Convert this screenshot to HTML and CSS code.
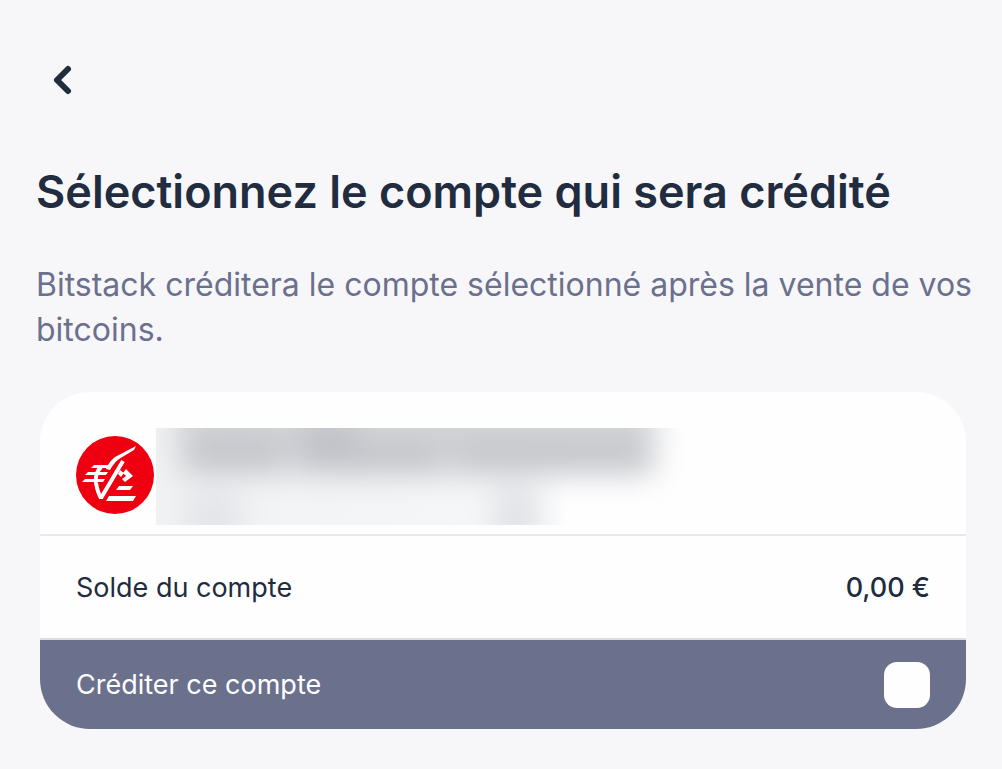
FILE: index.html
```html
<!DOCTYPE html>
<html lang="fr">
<head>
<meta charset="utf-8">
<meta name="viewport" content="width=device-width, initial-scale=1">
<title>Sélection du compte</title>
<link rel="stylesheet" href="styles.css">
</head>
<body>
<main class="page">
  <button class="back" type="button" aria-label="Retour">
    <svg class="back-icon" viewBox="0 0 24 32" aria-hidden="true"><path d="M18 5 7 16l11 11"/></svg>
  </button>
  <h1 class="title">Sélectionnez le compte qui sera crédité</h1>
  <p class="intro">Bitstack créditera le compte sélectionné après la vente de vos bitcoins.</p>
  <section class="card">
    <div class="bank">
      <svg class="bank-logo" viewBox="0 0 78 78" aria-hidden="true">
        <circle class="logo-disc" cx="39" cy="39" r="39"/>
        <path class="logo-mark" d="M60 10 39 21c-4 3-7 7-9 12l4 1c3-5 5-8 9-11l15-9z"/>
        <path class="logo-mark" d="M18 29h16l-2 3H15zM12 36h20l-2 3H9zM9 43h20l-2 3H6z"/>
        <path class="logo-stroke" d="M25 31c-4 4-6 9-5 16 1 6 2 10 5 15L47 25"/>
        <path class="logo-mark" d="m44 34 4 3-3 4-3-3zM50 33l7 7-8 6-3-3 4-3-3-3zM43 50h14l-3 4H40zM33 60h27l-3 5H30z"/>
      </svg>
      <svg class="bank-name" viewBox="0 0 544 97" preserveAspectRatio="none" aria-hidden="true">
        <defs>
          <filter id="soft" x="-20%" y="-100%" width="140%" height="300%"><feGaussianBlur stdDeviation="15"/></filter>
          <linearGradient id="fade"><stop offset="0" stop-color="#f1f2f3"/><stop offset=".55" stop-color="#f5f6f7"/><stop offset=".66" stop-color="#f5f6f7"/><stop offset=".76" stop-color="#fefefe"/></linearGradient>
        </defs>
        <rect width="544" height="97" fill="url(#fade)"/>
        <g filter="url(#soft)">
          <rect x="20" y="-30" width="480" height="76" fill="#d3d4d8"/>
          <rect x="35" y="10" width="90" height="34" fill="#c3c4c9"/>
          <rect x="145" y="-5" width="55" height="49" fill="#c0c1c8"/>
          <rect x="200" y="16" width="85" height="30" fill="#c1c2c7"/>
          <rect x="300" y="14" width="190" height="31" fill="#c3c4c9"/>
          <rect x="30" y="65" width="55" height="50" fill="#e2e4e8"/>
          <rect x="338" y="62" width="44" height="50" fill="#dfe1e5"/>
        </g>
      </svg>
    </div>
    <div class="row balance">
      <span>Solde du compte</span>
      <span class="amount">0,00 €</span>
    </div>
    <label class="row credit" for="credit-account">
      <span>Créditer ce compte</span>
      <input class="check" type="checkbox" id="credit-account">
    </label>
  </section>
</main>
</body>
</html>
```
FILE: styles.css
```css
* { box-sizing: border-box; }
body {
  margin: 0;
  background: #f7f7fa;
  color: #222c3f;
  font-family: Inter, "Liberation Sans", sans-serif;
}
.page { padding: 60px 28px 40px 36px; }
.back {
  display: flex;
  align-items: center;
  width: 44px;
  height: 40px;
  margin: 0 0 0 14px;
  padding: 0;
  border: 0;
  background: none;
  color: inherit;
  cursor: pointer;
}
.back-icon {
  width: 24px;
  height: 32px;
  fill: none;
  stroke: currentColor;
  stroke-width: 6;
  stroke-linecap: round;
  stroke-linejoin: round;
}
.title {
  margin: 64px 0 0;
  font-size: 45px;
  line-height: 56px;
  font-weight: 600;
}
.intro {
  margin: 42px 0 0;
  color: #6b708d;
  font-size: 32px;
  line-height: 45px;
}
.card {
  margin: 40px 8px 0 4px;
  border-radius: 50px;
  overflow: hidden;
  background: #fefefe;
}
.bank {
  display: flex;
  align-items: flex-start;
  gap: 2px;
  padding: 36px 36px 9px;
  border-bottom: 2px solid #e9e9ed;
}
.bank-logo {
  flex: none;
  width: 78px;
  height: 78px;
  margin-top: 8px;
}
.logo-disc { fill: #ee0010; }
.logo-mark { fill: #fff; }
.logo-stroke {
  fill: none;
  stroke: #fff;
  stroke-width: 4;
  stroke-linejoin: bevel;
}
.bank-name {
  flex: 0 1 544px;
  min-width: 0;
  height: 97px;
}
.row {
  display: flex;
  align-items: center;
  justify-content: space-between;
  padding: 0 36px;
  font-size: 27px;
  line-height: 36px;
}
.balance {
  min-height: 104px;
  padding-top: 2px;
  border-bottom: 2px solid #dddee5;
}
.amount { font-weight: 500; }
.credit {
  min-height: 89px;
  background: #6b708d;
  color: #fefefe;
}
.check {
  appearance: none;
  width: 46px;
  height: 46px;
  margin: 0;
  border-radius: 13px;
  background: #fefefe;
}
.check:checked { box-shadow: inset 0 0 0 12px #fefefe; background: #222c3f; }
```
